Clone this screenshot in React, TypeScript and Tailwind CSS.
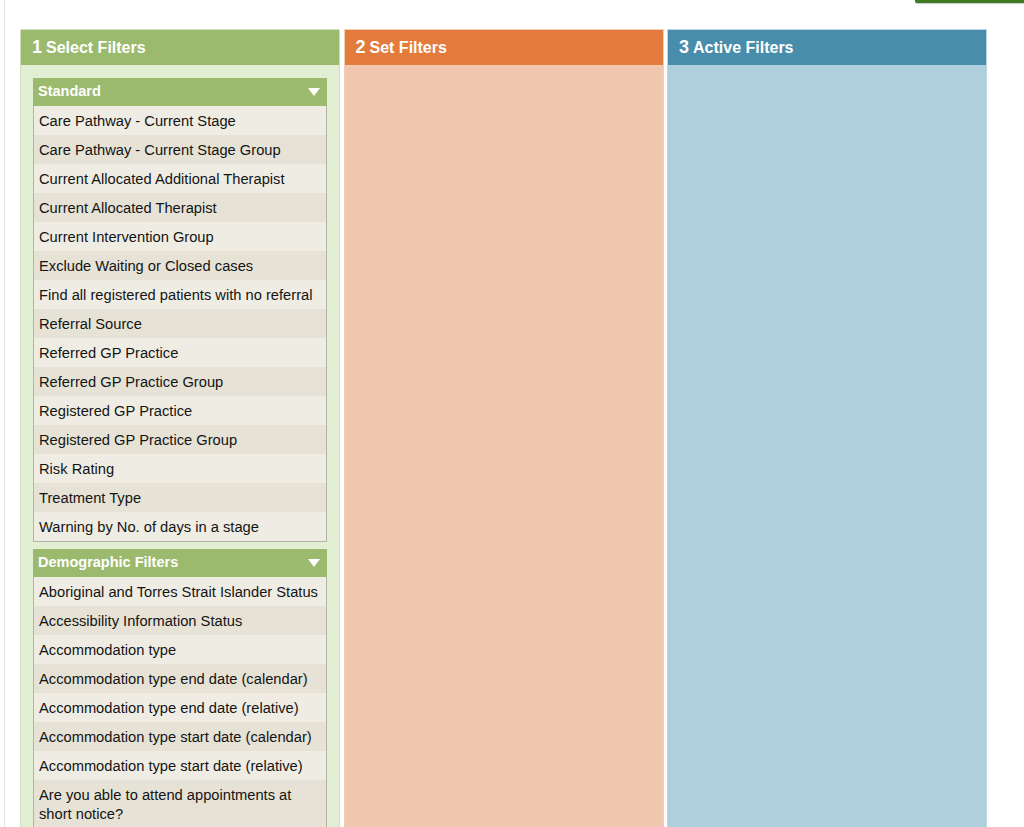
import React from 'react';

type FilterGroup = {
  title: string;
  items: string[];
};

const groups: FilterGroup[] = [
  {
    title: 'Standard',
    items: [
      'Care Pathway - Current Stage',
      'Care Pathway - Current Stage Group',
      'Current Allocated Additional Therapist',
      'Current Allocated Therapist',
      'Current Intervention Group',
      'Exclude Waiting or Closed cases',
      'Find all registered patients with no referral',
      'Referral Source',
      'Referred GP Practice',
      'Referred GP Practice Group',
      'Registered GP Practice',
      'Registered GP Practice Group',
      'Risk Rating',
      'Treatment Type',
      'Warning by No. of days in a stage',
    ],
  },
  {
    title: 'Demographic Filters',
    items: [
      'Aboriginal and Torres Strait Islander Status',
      'Accessibility Information Status',
      'Accommodation type',
      'Accommodation type end date (calendar)',
      'Accommodation type end date (relative)',
      'Accommodation type start date (calendar)',
      'Accommodation type start date (relative)',
      'Are you able to attend appointments at short notice?',
      'Are you currently in employment?',
      'Are you currently receiving benefits?',
    ],
  },
];

function GroupBox({ group }: { group: FilterGroup }) {
  return (
    <div className="border border-[#b3b3ab] border-t-0">
      <div className="h-[28px] bg-[#9cba6e] flex items-center justify-between pl-[5px] pr-[6px] -mx-px">
        <span className="text-white font-bold text-[14.5px]">{group.title}</span>
        <svg width="12" height="9" viewBox="0 0 12 9" className="mr-[1px]">
          <polygon points="0,0 12,0 6,8" fill="#ffffff" />
        </svg>
      </div>
      {group.items.map((item, i) => (
        <div
          key={item}
          className={
            'px-[5px] pt-[6px] pb-[4px] min-h-[29px] text-[14.7px] leading-[19px] text-[#141414] ' +
            (i % 2 === 0 ? 'bg-[#efede3]' : 'bg-[#e6e3d6]')
          }
        >
          {item}
        </div>
      ))}
    </div>
  );
}

export default function App() {
  return (
    <div className="h-[827px] overflow-hidden bg-white font-['Liberation_Sans',Arial,sans-serif]">
      <div className="ml-[4px] h-full border-l border-[#e6e6e6]">
        <div className="flex justify-end">
          <div className="h-[3px] w-[109px] bg-[#3f7a22] rounded-bl-[2px] shadow-[0_1px_1px_rgba(0,0,0,0.2)]" />
        </div>
        <div className="flex gap-[3.5px] pl-[15px] mt-[26px]">
          <div className="w-[320px] h-[820px] border border-[#cfe0bb] bg-[#e2efd3]">
            <div className="h-[35px] bg-[#9cba6e] flex items-center pl-[11px] text-white font-bold">
              <span className="text-[18px]">1</span>
              <span className="text-[16px] ml-[4px]">Select Filters</span>
            </div>
            <div className="px-[12px] pt-[13px] flex flex-col gap-[7px]">
              {groups.map(g => (
                <GroupBox key={g.title} group={g} />
              ))}
            </div>
          </div>
          <div className="w-[320px] h-[820px] border border-[#f2cdb6] bg-[#f0c7ae]">
            <div className="h-[35px] bg-[#e27b3b] flex items-center pl-[11px] text-white font-bold">
              <span className="text-[18px]">2</span>
              <span className="text-[16px] ml-[4px]">Set Filters</span>
            </div>
          </div>
          <div className="w-[320px] h-[820px] border border-[#b9d7e2] bg-[#aecfdb]">
            <div className="h-[35px] bg-[#488dab] flex items-center pl-[11px] text-white font-bold">
              <span className="text-[18px]">3</span>
              <span className="text-[16px] ml-[4px]">Active Filters</span>
            </div>
          </div>
        </div>
      </div>
    </div>
  );
}
